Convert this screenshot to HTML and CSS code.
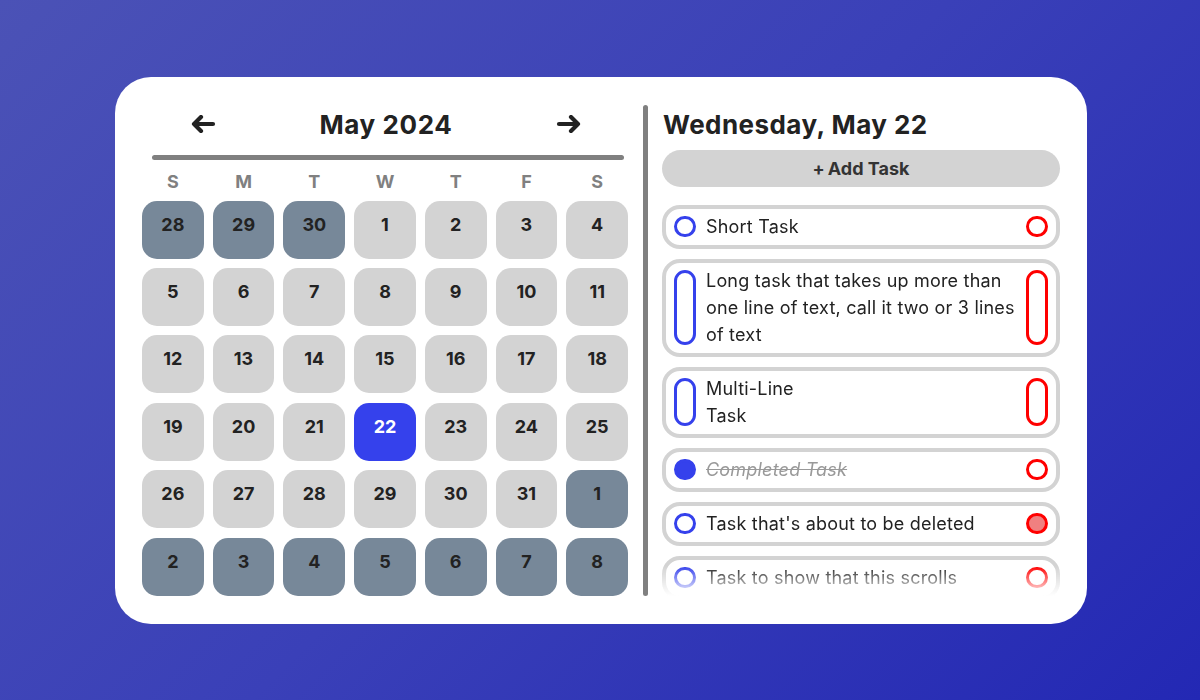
FILE: index.html
```html
<!DOCTYPE html>
<html lang="en">
<head>
<meta charset="utf-8">
<title>Calendar</title>
<link rel="stylesheet" href="styles.css">
</head>
<body>
<div class="card">
  <section class="calendar">
    <div class="cal-header">
      <svg class="arrow" viewBox="0 0 26 18" width="26" height="18" aria-label="previous month"><path d="M23 9 H4 M11 2 L4 9 L11 16"/></svg>
      <h1 class="month">May 2024</h1>
      <svg class="arrow" viewBox="0 0 26 18" width="26" height="18" aria-label="next month"><path d="M3 9 H22 M15 2 L22 9 L15 16"/></svg>
    </div>
    <div class="rule"></div>
    <div class="weekdays">
      <span>S</span><span>M</span><span>T</span><span>W</span><span>T</span><span>F</span><span>S</span>
    </div>
    <div class="grid">
      <div class="day other">28</div><div class="day other">29</div><div class="day other">30</div>
      <div class="day">1</div><div class="day">2</div><div class="day">3</div><div class="day">4</div>
      <div class="day">5</div><div class="day">6</div><div class="day">7</div><div class="day">8</div><div class="day">9</div><div class="day">10</div><div class="day">11</div>
      <div class="day">12</div><div class="day">13</div><div class="day">14</div><div class="day">15</div><div class="day">16</div><div class="day">17</div><div class="day">18</div>
      <div class="day">19</div><div class="day">20</div><div class="day">21</div><div class="day selected">22</div><div class="day">23</div><div class="day">24</div><div class="day">25</div>
      <div class="day">26</div><div class="day">27</div><div class="day">28</div><div class="day">29</div><div class="day">30</div><div class="day">31</div><div class="day other">1</div>
      <div class="day other">2</div><div class="day other">3</div><div class="day other">4</div><div class="day other">5</div><div class="day other">6</div><div class="day other">7</div><div class="day other">8</div>
    </div>
  </section>
  <div class="divider"></div>
  <section class="tasks">
    <h2 class="date-title">Wednesday, May 22</h2>
    <button class="add-btn"><span class="plus">+</span>Add Task</button>
    <div class="task-list">
      <div class="task"><span class="check"></span><span class="text">Short Task</span><span class="del"></span></div>
      <div class="task"><span class="check"></span><span class="text">Long task that takes up more than one line of text, call it two or 3 lines of text</span><span class="del"></span></div>
      <div class="task"><span class="check"></span><span class="text">Multi-Line<br>Task</span><span class="del"></span></div>
      <div class="task done"><span class="check"></span><span class="text">Completed Task</span><span class="del"></span></div>
      <div class="task deleting"><span class="check"></span><span class="text">Task that's about to be deleted</span><span class="del"></span></div>
      <div class="task"><span class="check"></span><span class="text">Task to show that this scrolls</span><span class="del"></span></div>
    </div>
  </section>
</div>
</body>
</html>
```

FILE: styles.css
```css
* { box-sizing: border-box; }

html, body {
  margin: 0;
  height: 100%;
}

body {
  font-family: Inter, "Noto Sans", sans-serif;
  background: linear-gradient(135deg, #4b52b6 0%, #3a40b8 50%, #2328b4 100%);
  display: flex;
  align-items: center;
  justify-content: center;
  color: #222;
}

.card {
  width: 972px;
  height: 547px;
  background: #fff;
  border-radius: 36px;
  padding: 28px 27px 28px 27px;
  display: flex;
  margin-left: 2px;
}

.calendar {
  width: 486px;
  display: flex;
  flex-direction: column;
}

.cal-header {
  height: 40px;
  display: flex;
  align-items: center;
  justify-content: space-between;
  padding: 0 46px 0 48px;
}

.arrow {
  fill: none;
  stroke: #222;
  stroke-width: 4.2;
  stroke-linecap: round;
  stroke-linejoin: round;
}

.month {
  margin: 0;
  font-size: 26px;
  font-weight: 700;
  letter-spacing: 0.6px;
  color: #222;
}

.rule {
  height: 5px;
  border-radius: 3px;
  background: #808080;
  margin: 11px 4px 0 10px;
}

.weekdays {
  display: grid;
  grid-template-columns: repeat(7, 1fr);
  column-gap: 9px;
  text-align: center;
  font-size: 18px;
  font-weight: 700;
  color: #808080;
  line-height: 24px;
  margin-top: 10px;
}

.grid {
  margin-top: 7px;
  display: grid;
  grid-template-columns: repeat(7, 1fr);
  grid-auto-rows: 58px;
  column-gap: 9px;
  row-gap: 9.4px;
}

.day {
  background: #d3d3d3;
  border-radius: 15px;
  text-align: center;
  font-size: 18px;
  font-weight: 700;
  line-height: 22px;
  padding-top: 13px;
  color: #222;
}

.day.other { background: #778899; }

.day.selected {
  background: #3541ec;
  color: #fff;
}

.divider {
  width: 5px;
  border-radius: 3px;
  background: #808080;
  margin: 0 14px 0 15px;
}

.tasks {
  flex: 1;
  display: flex;
  flex-direction: column;
  min-width: 0;
}

.date-title {
  margin: 0;
  height: 40px;
  line-height: 40px;
  font-size: 26px;
  font-weight: 700;
  letter-spacing: 0.45px;
  color: #222;
  padding-left: 1px;
}

.add-btn {
  margin-top: 5px;
  height: 37px;
  border: none;
  border-radius: 19px;
  background: #d3d3d3;
  font-family: inherit;
  font-size: 18px;
  font-weight: 700;
  color: #333;
  display: flex;
  align-items: center;
  justify-content: center;
}

.plus { margin-right: 3px; }

.task-list {
  margin-top: 18px;
  flex: 1;
  min-height: 0;
  overflow: hidden;
  display: flex;
  flex-direction: column;
  gap: 10px;
  -webkit-mask-image: linear-gradient(to bottom, #000 calc(100% - 30px), transparent 100%);
  mask-image: linear-gradient(to bottom, #000 calc(100% - 30px), transparent 100%);
}

.task {
  flex-shrink: 0;
  border: 4px solid #d3d3d3;
  border-radius: 18px;
  padding: 4.5px 8px;
  display: flex;
  align-items: stretch;
  gap: 10px;
  font-size: 18px;
  letter-spacing: 0.2px;
  line-height: 27px;
  color: #222;
}

.text { flex: 1; }

.check, .del {
  width: 22px;
  flex: 0 0 22px;
  margin: 3px 0;
  border-radius: 11px;
  border: 3.5px solid #3541ec;
}

.del { border-color: #ff0000; }

.task.done .check { background: #3541ec; }

.task.done .text {
  color: #999;
  font-style: italic;
  text-decoration: line-through;
}

.task.deleting .del { background: #f08080; }
```
